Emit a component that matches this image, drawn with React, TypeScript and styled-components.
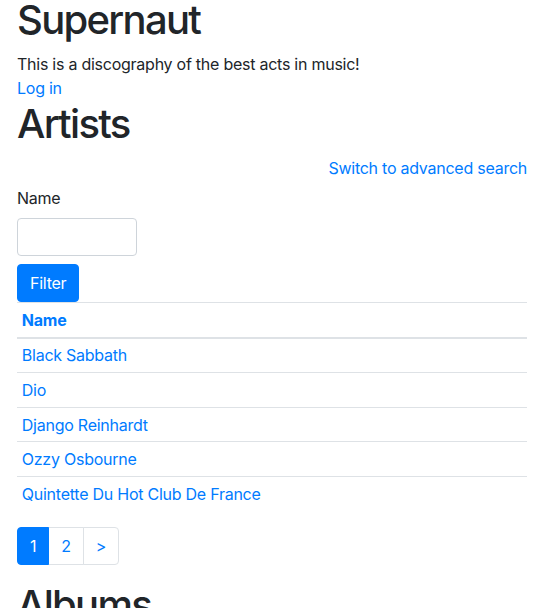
import React from "react";
import styled, { createGlobalStyle } from "styled-components";

const Global = createGlobalStyle`
  html, body { margin: 0; padding: 0; background: #fff; }
  body {
    font-family: Inter, "Liberation Sans", Arial, sans-serif;
    font-size: 16px;
    line-height: 1.5;
    letter-spacing: -0.25px;
    color: #212529;
  }
  * { box-sizing: border-box; }
`;

const Container = styled.div`
  margin: 0 26px 0 17px;
  display: flex;
  flex-direction: column;
`;

const Title = styled.h1`
  font-size: 40px;
  font-weight: 500;
  line-height: 1.2;
  letter-spacing: -1.7px;
  margin: 0 0 8px;
`;

const TopTitle = styled(Title)`
  margin: -4px 0 8px;
`;

const Intro = styled.p`
  margin: 0;
`;

const Link = styled.a`
  color: #007bff;
  text-decoration: none;
`;

const SwitchRow = styled.div`
  display: flex;
  justify-content: flex-end;
  margin-bottom: 6px;
`;

const FormGroup = styled.div`
  display: flex;
  flex-direction: column;
  align-items: flex-start;
  margin-bottom: 8px;
`;

const Label = styled.label`
  margin-bottom: 8px;
`;

const Input = styled.input`
  width: 120px;
  height: 38px;
  border: 1px solid #ced4da;
  border-radius: 4px;
  padding: 6px 12px;
  font: inherit;
`;

const Button = styled.button`
  align-self: flex-start;
  background: #007bff;
  color: #fff;
  border: 1px solid #007bff;
  border-radius: 4px;
  padding: 6px 12px;
  font: inherit;
  letter-spacing: inherit;
  line-height: 24px;
  height: 38px;
`;

const Table = styled.table`
  width: 100%;
  border-collapse: collapse;
  margin-bottom: 16px;
`;

const Th = styled.th`
  text-align: left;
  font-weight: 700;
  padding: 4.8px;
  border-top: 1px solid #dee2e6;
  border-bottom: 2px solid #dee2e6;
`;

const Td = styled.td`
  padding: 4.8px;
  border-top: 1px solid #dee2e6;
`;

const Pagination = styled.ul`
  display: flex;
  list-style: none;
  padding: 0;
  margin: 0 0 16px;
`;

const PageLink = styled.a<{ $active?: boolean; $first?: boolean; $last?: boolean }>`
  display: block;
  padding: 8px 12px;
  line-height: 20px;
  margin-left: ${(p) => (p.$first ? "0" : "-1px")};
  border: 1px solid ${(p) => (p.$active ? "#007bff" : "#dee2e6")};
  background: ${(p) => (p.$active ? "#007bff" : "#fff")};
  color: ${(p) => (p.$active ? "#fff" : "#007bff")};
  border-radius: ${(p) => (p.$first ? "4px 0 0 4px" : p.$last ? "0 4px 4px 0" : "0")};
  text-decoration: none;
  position: relative;
  z-index: ${(p) => (p.$active ? 1 : 0)};
`;

const artists = [
  "Black Sabbath",
  "Dio",
  "Django Reinhardt",
  "Ozzy Osbourne",
  "Quintette Du Hot Club De France",
];

export default function App() {
  return (
    <>
      <Global />
      <Container>
        <TopTitle>Supernaut</TopTitle>
        <Intro>This is a discography of the best acts in music!</Intro>
        <div>
          <Link href="#">Log in</Link>
        </div>
        <Title>Artists</Title>
        <SwitchRow>
          <Link href="#">Switch to advanced search</Link>
        </SwitchRow>
        <FormGroup>
          <Label>Name</Label>
          <Input type="text" />
        </FormGroup>
        <Button>Filter</Button>
        <Table>
          <thead>
            <tr>
              <Th>
                <Link href="#">Name</Link>
              </Th>
            </tr>
          </thead>
          <tbody>
            {artists.map((a) => (
              <tr key={a}>
                <Td>
                  <Link href="#">{a}</Link>
                </Td>
              </tr>
            ))}
          </tbody>
        </Table>
        <Pagination>
          <li>
            <PageLink $active $first href="#">1</PageLink>
          </li>
          <li>
            <PageLink href="#">2</PageLink>
          </li>
          <li>
            <PageLink $last href="#">&gt;</PageLink>
          </li>
        </Pagination>
        <Title>Albums</Title>
      </Container>
    </>
  );
}
